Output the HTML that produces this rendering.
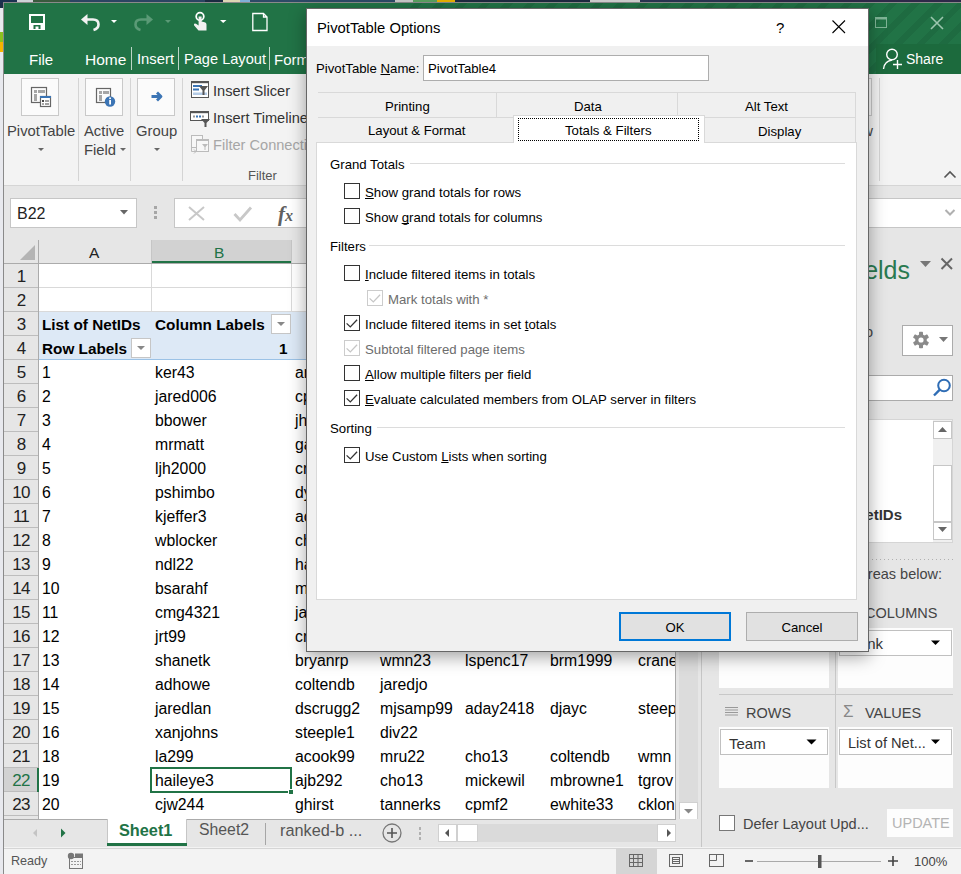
<!DOCTYPE html><html><head><meta charset="utf-8"><style>
*{margin:0;padding:0;box-sizing:border-box}
html,body{width:961px;height:874px;overflow:hidden}
body{position:relative;background:#1c3048;font-family:"Liberation Sans",sans-serif;color:#000}
.a{position:absolute}
.t{white-space:nowrap;line-height:1}
u{text-decoration-skip-ink:none}
</style></head><body>
<div class="a" style="left:0px;top:0px;width:961px;height:3px;background:linear-gradient(90deg,#1b3150 0 17px,#cfd3d8 17px 33px,#3a5a3e 33px 70px,#2b4562 70px 205px,#1b2a40 205px 223px,#ddd6b4 223px 240px,#7fb0d8 240px 250px,#2d4a66 250px 395px,#c8c8c8 395px 413px,#5aa060 413px 437px,#e8b000 437px 455px,#1e2a40 455px 590px,#cfcfcf 590px 640px,#2a3552 640px 720px,#2e2848 720px 961px)"></div>
<div class="a" style="left:0px;top:8px;width:3px;height:866px;background:#e8e9ee"></div>
<div class="a" style="left:0px;top:32px;width:3px;height:10px;background:#8cc11f"></div>
<div class="a" style="left:0px;top:42px;width:3px;height:10px;background:#f7b400"></div>
<div class="a" style="left:3px;top:2px;width:958px;height:872px;background:#8a8a8a"></div>
<div class="a" style="left:4px;top:3px;width:957px;height:871px;background:#e6e6e6"></div>
<div class="a" style="left:4px;top:3px;width:957px;height:71px;background:#217346"></div>
<div class="a" style="left:400px;top:3px;width:561px;height:71px;background:repeating-linear-gradient(135deg,#217346 0 10px,#1e6b41 10px 16px)"></div>
<div class="a" style="left:876px;top:44px;width:85px;height:30px;background:#1c6a3d"></div>
<div class="a" style="left:4px;top:74px;width:957px;height:111px;background:#f3f3f3"></div>
<div class="a" style="left:4px;top:185px;width:957px;height:1px;background:#d5d5d5"></div>
<div class="a" style="left:4px;top:186px;width:957px;height:54px;background:#e6e6e6"></div>
<svg class="a" style="left:0;top:0" width="961" height="80"><rect x="30" y="15" width="14" height="14" fill="none" stroke="#fff" stroke-width="2"/><rect x="29" y="23" width="16" height="7" fill="#fff"/><rect x="33.5" y="25" width="7" height="4" fill="#217346"/><rect x="35.5" y="26.5" width="3" height="2.5" fill="#fff"/><path d="M85 19.5 H93 Q98.5 19.5 98.5 24.5 Q98.5 28.5 93.5 30" fill="none" stroke="#f2f2f2" stroke-width="2.6"/><path d="M81 19.5 L87.5 14 L87.5 25 Z" fill="#f2f2f2"/><path d="M111 20 L117 20 L114 23 Z" fill="#fff"/><path d="M149 19.5 H141 Q135.5 19.5 135.5 24.5 Q135.5 28.5 140.5 30" fill="none" stroke="#5a9a76" stroke-width="2.6"/><path d="M153 19.5 L146.5 14 L146.5 25 Z" fill="#5a9a76"/><path d="M165 20 L171 20 L168 23 Z" fill="#5a9a76"/><circle cx="200" cy="16.5" r="3.8" fill="none" stroke="#fff" stroke-width="1.8"/><path d="M198.6 16.5 L198.6 25.5 L196 23.8 Q193.5 23 194 25.2 L198.5 30.5 L206.5 30.5 L206.5 24.5 Q206.5 22.6 204.6 22.2 L201.6 21.6 L201.6 16.5 Z" fill="#f2f2f2"/><path d="M220 20 L226.5 20 L223.2 23 Z" fill="#fff"/><path d="M252.8 13.5 L263.5 13.5 L267 17 L267 30.5 L252.8 30.5 Z M263.5 13.5 L263.5 17 L267 17" fill="none" stroke="#fff" stroke-width="1.3"/><rect x="875.5" y="17.5" width="11" height="10" fill="none" stroke="#7fb496" stroke-width="1"/><rect x="875.5" y="17.5" width="11" height="2" fill="#7fb496"/><path d="M931 17 L943 29 M943 17 L931 29" stroke="#9cc6ae" stroke-width="1.6"/></svg>
<div class="a t" style="left:29px;top:52px;font-size:15px;color:#fff">File</div>
<div class="a t" style="left:85px;top:52px;font-size:15.5px;color:#fff">Home</div>
<div class="a t" style="left:137px;top:52px;font-size:14.8px;color:#fff">Insert</div>
<div class="a t" style="left:184px;top:52px;font-size:14.6px;color:#fff">Page Layout</div>
<div class="a t" style="left:274px;top:52px;font-size:15px;color:#fff">Formulas</div>
<div class="a" style="left:131px;top:47px;width:1px;height:23px;background:#bcd5c6"></div>
<div class="a" style="left:178px;top:47px;width:1px;height:23px;background:#bcd5c6"></div>
<div class="a" style="left:269px;top:47px;width:1px;height:23px;background:#bcd5c6"></div>
<div class="a" style="left:876px;top:44px;width:85px;height:30px;background:#1c6a3d"></div>
<svg class="a" style="left:880px;top:46px" width="24" height="26"><circle cx="12" cy="8.5" r="5.3" fill="none" stroke="#fff" stroke-width="1.4"/><path d="M3.5 23 Q4 15.5 12 14" fill="none" stroke="#fff" stroke-width="1.4"/><path d="M13 18.5 L22 18.5 M17.5 14 L17.5 23" stroke="#fff" stroke-width="1.4"/></svg>
<div class="a t" style="left:906px;top:52px;font-size:14px;color:#fff">Share</div>
<div class="a" style="left:21px;top:78px;width:38px;height:38px;background:#fbfbfb;border:1px solid #c9c9c9"></div>
<div class="a" style="left:85px;top:78px;width:38px;height:38px;background:#fbfbfb;border:1px solid #c9c9c9"></div>
<div class="a" style="left:137px;top:78px;width:38px;height:38px;background:#fbfbfb;border:1px solid #c9c9c9"></div>
<div class="a" style="left:78px;top:78px;width:1px;height:103px;background:#d4d4d4"></div>
<div class="a" style="left:130px;top:78px;width:1px;height:103px;background:#d4d4d4"></div>
<div class="a" style="left:182px;top:78px;width:1px;height:103px;background:#d4d4d4"></div>
<svg class="a" style="left:0;top:74px" width="310" height="111"><rect x="31.5" y="13.5" width="15" height="15" fill="#fbfbfb" stroke="#666" stroke-width="1.2"/><rect x="34" y="16" width="3" height="3" fill="#a6a6a6"/><rect x="38" y="16" width="7" height="3" fill="#a6a6a6"/><rect x="34" y="20" width="3" height="7" fill="#a6a6a6"/><rect x="40.5" y="22.5" width="10" height="10" fill="#fff" stroke="#666" stroke-width="1.2"/><rect x="40" y="22" width="11" height="2" fill="#3a74b5"/><rect x="42" y="26" width="2" height="2" fill="#444"/><rect x="45" y="26.5" width="4" height="1" fill="#444"/><rect x="42" y="29" width="2" height="2" fill="#aaa"/><rect x="45" y="29.5" width="4" height="1" fill="#444"/><rect x="96.5" y="14.5" width="14" height="14" fill="#fbfbfb" stroke="#666" stroke-width="1.2"/><rect x="99" y="17" width="3" height="3" fill="#a6a6a6"/><rect x="103" y="17" width="6" height="3" fill="#a6a6a6"/><rect x="99" y="21" width="3" height="6" fill="#a6a6a6"/><circle cx="110" cy="27.5" r="5.2" fill="#3c75b5"/><rect x="109.2" y="26" width="1.8" height="4.5" fill="#fff"/><rect x="109.2" y="23.5" width="1.8" height="1.6" fill="#fff"/><path d="M151.5 22.5 H160.5 M157 18.5 L161 22.5 L157 26.5" fill="none" stroke="#3c75b5" stroke-width="2.8" stroke-linejoin="round"/><path d="M38 74 L44 74 L41 77 Z" fill="#666"/><path d="M120 74 L126 74 L123 77 Z" fill="#666"/><path d="M154 74 L160 74 L157 77 Z" fill="#666"/><rect x="191.5" y="7.5" width="17" height="16" fill="#fff" stroke="#555" stroke-width="1"/><rect x="191" y="7" width="18" height="2.2" fill="#555"/><rect x="193" y="11" width="9" height="2" fill="#3a74b5"/><rect x="193" y="14.5" width="6" height="2" fill="#3a74b5"/><rect x="193" y="18.5" width="14" height="2.5" fill="#b4cbe6"/><path d="M199 12 L208 12 L204.5 16.5 L204.5 21 L202.5 21 L202.5 16.5 Z" fill="#555"/><rect x="190.5" y="37.5" width="18" height="9" fill="#fff" stroke="#555" stroke-width="1"/><rect x="190" y="37" width="19" height="2.2" fill="#555"/><rect x="193" y="41.5" width="2" height="2" fill="#999"/><rect x="196" y="41.5" width="2" height="2" fill="#3a74b5"/><rect x="199" y="41.5" width="2" height="2" fill="#3a74b5"/><rect x="202" y="41.5" width="2" height="2" fill="#999"/><path d="M201 45 L210 45 L206.5 49 L206.5 53 L204.5 53 L204.5 49 Z" fill="#555"/><rect x="191.5" y="61.5" width="11" height="12" fill="#f7f7f7" stroke="#bbb" stroke-width="1"/><rect x="196.5" y="65.5" width="12" height="12" fill="#f7f7f7" stroke="#bbb" stroke-width="1"/><rect x="196" y="65" width="13" height="2" fill="#bbb"/><path d="M202 70 L208 70 L205.5 73 L205.5 76 L204.5 76 L204.5 73 Z" fill="#bbb"/><path d="M191.5 74 V77.5 H196 M194 75.5 L196 77.5 L194 79.5" fill="none" stroke="#bbb" stroke-width="1"/></svg>
<div class="a t" style="left:7px;top:124px;font-size:14.8px;color:#444444">PivotTable</div>
<div class="a t" style="left:84px;top:124px;font-size:14.8px;color:#444444">Active</div>
<div class="a t" style="left:84px;top:143px;font-size:14.8px;color:#444444">Field</div>
<div class="a t" style="left:136px;top:124px;font-size:14.8px;color:#444444">Group</div>
<div class="a t" style="left:213px;top:84px;font-size:14.6px;color:#333">Insert Slicer</div>
<div class="a t" style="left:213px;top:111px;font-size:14.6px;color:#333">Insert Timeline</div>
<div class="a t" style="left:213px;top:138px;font-size:14.6px;color:#a6a6a6">Filter Connections</div>
<div class="a t" style="left:248px;top:169px;font-size:13px;color:#555">Filter</div>
<div class="a" style="left:879px;top:78px;width:1px;height:103px;background:#d4d4d4"></div>
<svg class="a" style="left:940px;top:166px" width="20" height="16"><path d="M4.5 11.5 L10 6 L15.5 11.5" fill="none" stroke="#555" stroke-width="1.6"/></svg>
<div class="a" style="left:850px;top:78px;width:22px;height:38px;background:#fbfbfb;border:1px solid #c9c9c9"></div>
<div class="a t" style="right:88px;top:124px;font-size:14.8px;color:#444">Show</div>
<div class="a" style="left:10px;top:198px;width:127px;height:30px;background:#fff;border:1px solid #c6c6c6"></div>
<div class="a t" style="left:17px;top:206px;font-size:16px;color:#222">B22</div>
<svg class="a" style="left:118px;top:208px" width="14" height="10"><path d="M2 2 L10 2 L6 6.5 Z" fill="#666"/></svg>
<div class="a" style="left:154px;top:206px;width:3px;height:3px;background:#a6a6a6"></div>
<div class="a" style="left:154px;top:211px;width:3px;height:3px;background:#a6a6a6"></div>
<div class="a" style="left:154px;top:216px;width:3px;height:3px;background:#a6a6a6"></div>
<div class="a" style="left:174px;top:198px;width:787px;height:30px;background:#fff;border:1px solid #c6c6c6;border-right:none"></div>
<svg class="a" style="left:180px;top:200px" width="130" height="26"><path d="M9 7 L24 20 M24 7 L9 20" stroke="#c8c8c8" stroke-width="2"/><path d="M54.5 14 L60 20 L71 7.5" fill="none" stroke="#c8c8c8" stroke-width="2.8"/></svg>
<div class="a t" style="left:278px;top:204px;font-family:Liberation Serif,serif;font-size:21px;color:#606060;font-weight:bold"><i>f</i><i style="font-size:16px;margin-left:0px">x</i></div>
<svg class="a" style="left:940px;top:205px" width="18" height="16"><path d="M5.5 5 L10 9.5 L14.5 5" fill="none" stroke="#b0b0b0" stroke-width="2"/></svg>
<div class="a" style="left:4px;top:240px;width:672px;height:579px;background:#fff"></div>
<div class="a" style="left:4px;top:240px;width:672px;height:23px;background:#e6e6e6"></div>
<div class="a" style="left:151px;top:240px;width:140px;height:23px;background:#d2d2d2"></div>
<div class="a" style="left:151px;top:261px;width:140px;height:2px;background:#217346"></div>
<div class="a" style="left:4px;top:263px;width:672px;height:1px;background:#ababab"></div>
<div class="a" style="left:151px;top:240px;width:1px;height:23px;background:#c6c6c6"></div>
<div class="a" style="left:291px;top:240px;width:1px;height:23px;background:#c6c6c6"></div>
<div class="a" style="left:376px;top:240px;width:1px;height:23px;background:#c6c6c6"></div>
<div class="a" style="left:461px;top:240px;width:1px;height:23px;background:#c6c6c6"></div>
<div class="a" style="left:546px;top:240px;width:1px;height:23px;background:#c6c6c6"></div>
<div class="a" style="left:634px;top:240px;width:1px;height:23px;background:#c6c6c6"></div>
<svg class="a" style="left:0;top:240px" width="40" height="24"><path d="M20 20 L35 20 L35 5 Z" fill="#b4b4b4"/></svg>
<div class="a t" style="left:89px;top:245px;font-size:15.5px;color:#222">A</div>
<div class="a t" style="left:214px;top:245px;font-size:15.5px;color:#217346">B</div>
<div class="a" style="left:4px;top:264px;width:34px;height:555px;background:#e6e6e6"></div>
<div class="a" style="left:38px;top:240px;width:1px;height:579px;background:#ababab"></div>
<div class="a" style="left:4px;top:287px;width:34px;height:1px;background:#bdbdbd"></div>
<div class="a t" style="left:4px;top:268px;width:34px;text-align:center;font-size:17px;letter-spacing:-0.8px;color:#222">1</div>
<div class="a" style="left:4px;top:311px;width:34px;height:1px;background:#bdbdbd"></div>
<div class="a t" style="left:4px;top:292px;width:34px;text-align:center;font-size:17px;letter-spacing:-0.8px;color:#222">2</div>
<div class="a" style="left:4px;top:335px;width:34px;height:1px;background:#bdbdbd"></div>
<div class="a t" style="left:4px;top:316px;width:34px;text-align:center;font-size:17px;letter-spacing:-0.8px;color:#222">3</div>
<div class="a" style="left:4px;top:359px;width:34px;height:1px;background:#bdbdbd"></div>
<div class="a t" style="left:4px;top:340px;width:34px;text-align:center;font-size:17px;letter-spacing:-0.8px;color:#222">4</div>
<div class="a" style="left:4px;top:383px;width:34px;height:1px;background:#bdbdbd"></div>
<div class="a t" style="left:4px;top:364px;width:34px;text-align:center;font-size:17px;letter-spacing:-0.8px;color:#222">5</div>
<div class="a" style="left:4px;top:407px;width:34px;height:1px;background:#bdbdbd"></div>
<div class="a t" style="left:4px;top:388px;width:34px;text-align:center;font-size:17px;letter-spacing:-0.8px;color:#222">6</div>
<div class="a" style="left:4px;top:431px;width:34px;height:1px;background:#bdbdbd"></div>
<div class="a t" style="left:4px;top:412px;width:34px;text-align:center;font-size:17px;letter-spacing:-0.8px;color:#222">7</div>
<div class="a" style="left:4px;top:455px;width:34px;height:1px;background:#bdbdbd"></div>
<div class="a t" style="left:4px;top:436px;width:34px;text-align:center;font-size:17px;letter-spacing:-0.8px;color:#222">8</div>
<div class="a" style="left:4px;top:479px;width:34px;height:1px;background:#bdbdbd"></div>
<div class="a t" style="left:4px;top:460px;width:34px;text-align:center;font-size:17px;letter-spacing:-0.8px;color:#222">9</div>
<div class="a" style="left:4px;top:503px;width:34px;height:1px;background:#bdbdbd"></div>
<div class="a t" style="left:4px;top:484px;width:34px;text-align:center;font-size:17px;letter-spacing:-0.8px;color:#222">10</div>
<div class="a" style="left:4px;top:527px;width:34px;height:1px;background:#bdbdbd"></div>
<div class="a t" style="left:4px;top:508px;width:34px;text-align:center;font-size:17px;letter-spacing:-0.8px;color:#222">11</div>
<div class="a" style="left:4px;top:551px;width:34px;height:1px;background:#bdbdbd"></div>
<div class="a t" style="left:4px;top:532px;width:34px;text-align:center;font-size:17px;letter-spacing:-0.8px;color:#222">12</div>
<div class="a" style="left:4px;top:575px;width:34px;height:1px;background:#bdbdbd"></div>
<div class="a t" style="left:4px;top:556px;width:34px;text-align:center;font-size:17px;letter-spacing:-0.8px;color:#222">13</div>
<div class="a" style="left:4px;top:599px;width:34px;height:1px;background:#bdbdbd"></div>
<div class="a t" style="left:4px;top:580px;width:34px;text-align:center;font-size:17px;letter-spacing:-0.8px;color:#222">14</div>
<div class="a" style="left:4px;top:623px;width:34px;height:1px;background:#bdbdbd"></div>
<div class="a t" style="left:4px;top:604px;width:34px;text-align:center;font-size:17px;letter-spacing:-0.8px;color:#222">15</div>
<div class="a" style="left:4px;top:647px;width:34px;height:1px;background:#bdbdbd"></div>
<div class="a t" style="left:4px;top:628px;width:34px;text-align:center;font-size:17px;letter-spacing:-0.8px;color:#222">16</div>
<div class="a" style="left:4px;top:671px;width:34px;height:1px;background:#bdbdbd"></div>
<div class="a t" style="left:4px;top:652px;width:34px;text-align:center;font-size:17px;letter-spacing:-0.8px;color:#222">17</div>
<div class="a" style="left:4px;top:695px;width:34px;height:1px;background:#bdbdbd"></div>
<div class="a t" style="left:4px;top:676px;width:34px;text-align:center;font-size:17px;letter-spacing:-0.8px;color:#222">18</div>
<div class="a" style="left:4px;top:719px;width:34px;height:1px;background:#bdbdbd"></div>
<div class="a t" style="left:4px;top:700px;width:34px;text-align:center;font-size:17px;letter-spacing:-0.8px;color:#222">19</div>
<div class="a" style="left:4px;top:743px;width:34px;height:1px;background:#bdbdbd"></div>
<div class="a t" style="left:4px;top:724px;width:34px;text-align:center;font-size:17px;letter-spacing:-0.8px;color:#222">20</div>
<div class="a" style="left:4px;top:767px;width:34px;height:1px;background:#bdbdbd"></div>
<div class="a t" style="left:4px;top:748px;width:34px;text-align:center;font-size:17px;letter-spacing:-0.8px;color:#222">21</div>
<div class="a" style="left:4px;top:791px;width:34px;height:1px;background:#bdbdbd"></div>
<div class="a" style="left:4px;top:768px;width:34px;height:23px;background:#d2d2d2"></div>
<div class="a" style="left:37px;top:768px;width:2px;height:24px;background:#217346"></div>
<div class="a t" style="left:4px;top:772px;width:34px;text-align:center;font-size:17px;letter-spacing:-0.8px;color:#217346">22</div>
<div class="a" style="left:4px;top:815px;width:34px;height:1px;background:#bdbdbd"></div>
<div class="a t" style="left:4px;top:796px;width:34px;text-align:center;font-size:17px;letter-spacing:-0.8px;color:#222">23</div>
<div class="a" style="left:39px;top:287px;width:637px;height:1px;background:#d9d9d9"></div>
<div class="a" style="left:39px;top:311px;width:637px;height:1px;background:#d9d9d9"></div>
<div class="a" style="left:151px;top:264px;width:1px;height:47px;background:#d9d9d9"></div>
<div class="a" style="left:291px;top:264px;width:1px;height:47px;background:#d9d9d9"></div>
<div class="a" style="left:376px;top:264px;width:1px;height:47px;background:#d9d9d9"></div>
<div class="a" style="left:461px;top:264px;width:1px;height:47px;background:#d9d9d9"></div>
<div class="a" style="left:546px;top:264px;width:1px;height:47px;background:#d9d9d9"></div>
<div class="a" style="left:634px;top:264px;width:1px;height:47px;background:#d9d9d9"></div>
<div class="a" style="left:39px;top:312px;width:637px;height:48px;background:#dde9f6"></div>
<div class="a" style="left:39px;top:359px;width:637px;height:1px;background:#9bc2e6"></div>
<div class="a t" style="left:42px;top:317px;font-weight:bold;font-size:15.3px;color:#000">List of NetIDs</div>
<div class="a t" style="left:155px;top:317px;font-weight:bold;font-size:15.3px;color:#000">Column Labels</div>
<div class="a t" style="left:42px;top:341px;font-weight:bold;font-size:15.3px;color:#000">Row Labels</div>
<div class="a t" style="left:279px;top:341px;font-weight:bold;font-size:15.3px;color:#000">1</div>
<div class="a" style="left:271px;top:314px;width:20px;height:20px;background:#fff;border:1px solid #c6c6c6"></div>
<svg class="a" style="left:271px;top:314px" width="20" height="20"><path d="M6 8 L14 8 L10 12 Z" fill="#888"/></svg>
<div class="a" style="left:131px;top:338px;width:20px;height:20px;background:#fff;border:1px solid #c6c6c6"></div>
<svg class="a" style="left:131px;top:338px" width="20" height="20"><path d="M6 8 L14 8 L10 12 Z" fill="#888"/></svg>
<div class="a" style="left:39px;top:360px;width:636px;height:459px;overflow:hidden">
<div class="a t" style="left:3px;top:5px;font-size:15.8px;color:#000">1</div>
<div class="a t" style="left:116px;top:5px;font-size:15.8px;color:#000">ker43</div>
<div class="a t" style="left:256px;top:5px;font-size:15.8px;color:#000">ar</div>
<div class="a t" style="left:3px;top:29px;font-size:15.8px;color:#000">2</div>
<div class="a t" style="left:116px;top:29px;font-size:15.8px;color:#000">jared006</div>
<div class="a t" style="left:256px;top:29px;font-size:15.8px;color:#000">cp</div>
<div class="a t" style="left:3px;top:53px;font-size:15.8px;color:#000">3</div>
<div class="a t" style="left:116px;top:53px;font-size:15.8px;color:#000">bbower</div>
<div class="a t" style="left:256px;top:53px;font-size:15.8px;color:#000">jh</div>
<div class="a t" style="left:3px;top:77px;font-size:15.8px;color:#000">4</div>
<div class="a t" style="left:116px;top:77px;font-size:15.8px;color:#000">mrmatt</div>
<div class="a t" style="left:256px;top:77px;font-size:15.8px;color:#000">ga</div>
<div class="a t" style="left:3px;top:101px;font-size:15.8px;color:#000">5</div>
<div class="a t" style="left:116px;top:101px;font-size:15.8px;color:#000">ljh2000</div>
<div class="a t" style="left:256px;top:101px;font-size:15.8px;color:#000">cr</div>
<div class="a t" style="left:3px;top:125px;font-size:15.8px;color:#000">6</div>
<div class="a t" style="left:116px;top:125px;font-size:15.8px;color:#000">pshimbo</div>
<div class="a t" style="left:256px;top:125px;font-size:15.8px;color:#000">dy</div>
<div class="a t" style="left:3px;top:149px;font-size:15.8px;color:#000">7</div>
<div class="a t" style="left:116px;top:149px;font-size:15.8px;color:#000">kjeffer3</div>
<div class="a t" style="left:256px;top:149px;font-size:15.8px;color:#000">ac</div>
<div class="a t" style="left:3px;top:173px;font-size:15.8px;color:#000">8</div>
<div class="a t" style="left:116px;top:173px;font-size:15.8px;color:#000">wblocker</div>
<div class="a t" style="left:256px;top:173px;font-size:15.8px;color:#000">ch</div>
<div class="a t" style="left:3px;top:197px;font-size:15.8px;color:#000">9</div>
<div class="a t" style="left:116px;top:197px;font-size:15.8px;color:#000">ndl22</div>
<div class="a t" style="left:256px;top:197px;font-size:15.8px;color:#000">ha</div>
<div class="a t" style="left:3px;top:221px;font-size:15.8px;color:#000">10</div>
<div class="a t" style="left:116px;top:221px;font-size:15.8px;color:#000">bsarahf</div>
<div class="a t" style="left:256px;top:221px;font-size:15.8px;color:#000">m</div>
<div class="a t" style="left:3px;top:245px;font-size:15.8px;color:#000">11</div>
<div class="a t" style="left:116px;top:245px;font-size:15.8px;color:#000">cmg4321</div>
<div class="a t" style="left:256px;top:245px;font-size:15.8px;color:#000">ja</div>
<div class="a t" style="left:3px;top:269px;font-size:15.8px;color:#000">12</div>
<div class="a t" style="left:116px;top:269px;font-size:15.8px;color:#000">jrt99</div>
<div class="a t" style="left:256px;top:269px;font-size:15.8px;color:#000">cr</div>
<div class="a t" style="left:3px;top:293px;font-size:15.8px;color:#000">13</div>
<div class="a t" style="left:116px;top:293px;font-size:15.8px;color:#000">shanetk</div>
<div class="a t" style="left:256px;top:293px;font-size:15.8px;color:#000">bryanrp</div>
<div class="a t" style="left:341px;top:293px;font-size:15.8px;color:#000">wmn23</div>
<div class="a t" style="left:426px;top:293px;font-size:15.8px;color:#000">lspenc17</div>
<div class="a t" style="left:511px;top:293px;font-size:15.8px;color:#000">brm1999</div>
<div class="a t" style="left:599px;top:293px;font-size:15.8px;color:#000">crane</div>
<div class="a t" style="left:3px;top:317px;font-size:15.8px;color:#000">14</div>
<div class="a t" style="left:116px;top:317px;font-size:15.8px;color:#000">adhowe</div>
<div class="a t" style="left:256px;top:317px;font-size:15.8px;color:#000">coltendb</div>
<div class="a t" style="left:341px;top:317px;font-size:15.8px;color:#000">jaredjo</div>
<div class="a t" style="left:3px;top:341px;font-size:15.8px;color:#000">15</div>
<div class="a t" style="left:116px;top:341px;font-size:15.8px;color:#000">jaredlan</div>
<div class="a t" style="left:256px;top:341px;font-size:15.8px;color:#000">dscrugg2</div>
<div class="a t" style="left:341px;top:341px;font-size:15.8px;color:#000">mjsamp99</div>
<div class="a t" style="left:426px;top:341px;font-size:15.8px;color:#000">aday2418</div>
<div class="a t" style="left:511px;top:341px;font-size:15.8px;color:#000">djayc</div>
<div class="a t" style="left:599px;top:341px;font-size:15.8px;color:#000">steeple</div>
<div class="a t" style="left:3px;top:365px;font-size:15.8px;color:#000">16</div>
<div class="a t" style="left:116px;top:365px;font-size:15.8px;color:#000">xanjohns</div>
<div class="a t" style="left:256px;top:365px;font-size:15.8px;color:#000">steeple1</div>
<div class="a t" style="left:341px;top:365px;font-size:15.8px;color:#000">div22</div>
<div class="a t" style="left:3px;top:389px;font-size:15.8px;color:#000">18</div>
<div class="a t" style="left:116px;top:389px;font-size:15.8px;color:#000">la299</div>
<div class="a t" style="left:256px;top:389px;font-size:15.8px;color:#000">acook99</div>
<div class="a t" style="left:341px;top:389px;font-size:15.8px;color:#000">mru22</div>
<div class="a t" style="left:426px;top:389px;font-size:15.8px;color:#000">cho13</div>
<div class="a t" style="left:511px;top:389px;font-size:15.8px;color:#000">coltendb</div>
<div class="a t" style="left:599px;top:389px;font-size:15.8px;color:#000">wmn</div>
<div class="a t" style="left:3px;top:413px;font-size:15.8px;color:#000">19</div>
<div class="a t" style="left:116px;top:413px;font-size:15.8px;color:#000">haileye3</div>
<div class="a t" style="left:256px;top:413px;font-size:15.8px;color:#000">ajb292</div>
<div class="a t" style="left:341px;top:413px;font-size:15.8px;color:#000">cho13</div>
<div class="a t" style="left:426px;top:413px;font-size:15.8px;color:#000">mickewil</div>
<div class="a t" style="left:511px;top:413px;font-size:15.8px;color:#000">mbrowne1</div>
<div class="a t" style="left:599px;top:413px;font-size:15.8px;color:#000">tgrov</div>
<div class="a t" style="left:3px;top:437px;font-size:15.8px;color:#000">20</div>
<div class="a t" style="left:116px;top:437px;font-size:15.8px;color:#000">cjw244</div>
<div class="a t" style="left:256px;top:437px;font-size:15.8px;color:#000">ghirst</div>
<div class="a t" style="left:341px;top:437px;font-size:15.8px;color:#000">tannerks</div>
<div class="a t" style="left:426px;top:437px;font-size:15.8px;color:#000">cpmf2</div>
<div class="a t" style="left:511px;top:437px;font-size:15.8px;color:#000">ewhite33</div>
<div class="a t" style="left:599px;top:437px;font-size:15.8px;color:#000">cklon</div>
</div>
<div class="a" style="left:150px;top:767px;width:142px;height:26px;border:2px solid #217346"></div>
<div class="a" style="left:288px;top:789px;width:6px;height:6px;background:#217346;border:1px solid #fff"></div>
<div class="a" style="left:676px;top:240px;width:25px;height:579px;background:#e6e6e6"></div>
<div class="a" style="left:675px;top:240px;width:1px;height:579px;background:#ababab"></div>
<div class="a" style="left:679px;top:264px;width:19px;height:538px;background:#dcdcdc"></div>
<div class="a" style="left:679px;top:802px;width:19px;height:18px;background:#fff;border:1px solid #d0d0d0"></div>
<svg class="a" style="left:679px;top:802px" width="19" height="18"><path d="M5 7 L14 7 L9.5 11.5 Z" fill="#888"/></svg>
<div class="a" style="left:676px;top:819px;width:26px;height:1px;background:#ababab"></div>
<div class="a" style="left:4px;top:819px;width:698px;height:29px;background:#e6e6e6"></div>
<div class="a" style="left:4px;top:819px;width:672px;height:1px;background:#ababab"></div>
<svg class="a" style="left:0;top:824px" width="80" height="20"><path d="M33 9 L37 5 L37 13 Z" fill="#c4c4c4"/><path d="M61 4.5 L65.5 9 L61 13.5 Z" fill="#217346"/></svg>
<div class="a" style="left:107px;top:819px;width:80px;height:27px;background:#fff;border-left:1px solid #c6c6c6;border-right:1px solid #c6c6c6"></div>
<div class="a" style="left:107px;top:843px;width:80px;height:3px;background:#217346"></div>
<div class="a t" style="left:119px;top:822px;font-weight:bold;font-size:16.3px;color:#217346">Sheet1</div>
<div class="a t" style="left:199px;top:822px;font-size:15.8px;color:#555">Sheet2</div>
<div class="a" style="left:265px;top:823px;width:1px;height:22px;background:#a6a6a6"></div>
<div class="a t" style="left:280px;top:822px;font-size:16.3px;color:#555">ranked-b&nbsp;...</div>
<svg class="a" style="left:380px;top:820px" width="24" height="26"><circle cx="12" cy="13" r="9" fill="none" stroke="#777" stroke-width="1.3"/><path d="M7 13 L17 13 M12 8 L12 18" stroke="#555" stroke-width="1.6"/></svg>
<div class="a" style="left:419px;top:827px;width:2px;height:3px;background:#b0b0b0"></div>
<div class="a" style="left:419px;top:832px;width:2px;height:3px;background:#b0b0b0"></div>
<div class="a" style="left:419px;top:837px;width:2px;height:3px;background:#b0b0b0"></div>
<div class="a" style="left:438px;top:824px;width:238px;height:18px;background:#dadada"></div>
<div class="a" style="left:438px;top:824px;width:19px;height:18px;background:#fff;border:1px solid #d0d0d0"></div>
<div class="a" style="left:457px;top:824px;width:21px;height:18px;background:#fff;border:1px solid #d0d0d0"></div>
<div class="a" style="left:657px;top:824px;width:19px;height:18px;background:#fff;border:1px solid #d0d0d0"></div>
<svg class="a" style="left:438px;top:824px" width="240" height="18"><path d="M11 5 L7 9 L11 13 Z" fill="#555"/><path d="M229 5 L233 9 L229 13 Z" fill="#555"/></svg>
<div class="a" style="left:701px;top:819px;width:1px;height:29px;background:#c6c6c6"></div>
<div class="a" style="left:4px;top:847px;width:957px;height:27px;background:#f3f3f3"></div>
<div class="a" style="left:4px;top:848px;width:957px;height:1px;background:#d5d5d5"></div>
<div class="a t" style="left:11px;top:855px;font-size:12.6px;color:#555">Ready</div>
<svg class="a" style="left:66px;top:851px" width="20" height="20"><rect x="3.5" y="6.5" width="13" height="11" fill="none" stroke="#777"/><path d="M5 10.5 H15 M5 13.5 H15" stroke="#999" stroke-width="1" stroke-dasharray="2,1"/><circle cx="5" cy="5" r="3.2" fill="#777"/><rect x="9" y="2.5" width="8" height="4" fill="#777"/></svg>
<div class="a" style="left:616px;top:848px;width:41px;height:26px;background:#d5d5d5"></div>
<svg class="a" style="left:616px;top:848px" width="130" height="26"><rect x="13.5" y="6.5" width="13" height="12" fill="none" stroke="#666"/><path d="M13.5 10.5 H26.5 M13.5 14.5 H26.5 M17.5 6.5 V18.5 M22 6.5 V18.5" stroke="#666"/><rect x="53.5" y="6.5" width="13" height="12" fill="none" stroke="#666"/><rect x="56.5" y="9.5" width="7" height="6" fill="none" stroke="#666"/><path d="M57 11.5 H63 M57 13.5 H63" stroke="#666"/><rect x="93.5" y="6.5" width="14" height="12" fill="none" stroke="#666"/><path d="M100.5 6.5 V12.5 H93.5" fill="none" stroke="#666"/></svg>
<svg class="a" style="left:740px;top:848px" width="221" height="26"><path d="M5 13 H13" stroke="#444" stroke-width="1.6"/><path d="M17 13.5 H141" stroke="#aaa" stroke-width="1"/><rect x="78" y="7" width="3.5" height="13" fill="#555"/><path d="M148 13 H158 M153 8 V18" stroke="#444" stroke-width="1.6"/></svg>
<div class="a t" style="left:914px;top:855px;font-size:13px;color:#444">100%</div>
<div class="a" style="left:702px;top:228px;width:259px;height:619px;background:#e6e6e6"></div>
<div class="a" style="left:701px;top:228px;width:1px;height:619px;background:#c6c6c6"></div>
<div class="a t" style="right:51px;top:258px;font-size:25px;color:#2a7a50">PivotTable Fields</div>
<svg class="a" style="left:915px;top:255px" width="46" height="20"><path d="M5 6 L16 6 L10.5 12 Z" fill="#777"/><path d="M26.5 3.5 L37 14 M37 3.5 L26.5 14" stroke="#666" stroke-width="2"/></svg>
<div class="a t" style="right:88px;top:325px;font-size:14.5px;color:#444">Choose fields to add to</div>
<div class="a" style="left:902px;top:325px;width:51px;height:31px;background:#fff;border:1px solid #ababab"></div>
<svg class="a" style="left:902px;top:325px" width="51" height="31"><g transform="translate(19,15)" fill="#8a8a8a"><circle r="5.8"/><rect x="-2" y="-8.2" width="4" height="16.4" rx="0.8"/><rect x="-2" y="-8.2" width="4" height="16.4" rx="0.8" transform="rotate(60)"/><rect x="-2" y="-8.2" width="4" height="16.4" rx="0.8" transform="rotate(120)"/><circle r="2.6" fill="#fff"/></g><path d="M37 12 L46 12 L41.5 17 Z" fill="#777"/></svg>
<div class="a" style="left:712px;top:375px;width:241px;height:26px;background:#fff;border:1px solid #ababab"></div>
<svg class="a" style="left:930px;top:377px" width="22" height="22"><circle cx="14" cy="8.5" r="5.8" fill="none" stroke="#2f6db5" stroke-width="2"/><path d="M9.8 12.7 L4 18.5" stroke="#2f6db5" stroke-width="2.4"/></svg>
<div class="a" style="left:712px;top:419px;width:241px;height:124px;background:#fff;border:1px solid #d5d5d5"></div>
<div class="a" style="left:933px;top:420px;width:19px;height:122px;background:#f0f0f0"></div>
<div class="a" style="left:933px;top:421px;width:19px;height:18px;background:#fff;border:1px solid #c6c6c6"></div>
<div class="a" style="left:933px;top:465px;width:19px;height:57px;background:#fff;border:1px solid #c6c6c6"></div>
<div class="a" style="left:933px;top:522px;width:19px;height:18px;background:#fff;border:1px solid #c6c6c6"></div>
<svg class="a" style="left:933px;top:421px" width="19" height="120"><path d="M5 11 L14 11 L9.5 6 Z" fill="#666"/><path d="M5 106 L14 106 L9.5 111 Z" fill="#666"/></svg>
<div class="a t" style="right:59px;top:507px;font-size:15px;font-weight:bold;color:#333">List of NetIDs</div>
<svg class="a" style="left:712px;top:558px" width="241" height="3"><line x1="0" y1="1.5" x2="241" y2="1.5" stroke="#b0b0b0" stroke-dasharray="1,3"/></svg>
<div class="a t" style="right:19px;top:567px;font-size:14.5px;color:#444">Drag fields between areas below:</div>
<div class="a" style="left:719px;top:628px;width:110px;height:60px;background:#fdfdfd"></div>
<div class="a" style="left:838px;top:628px;width:115px;height:60px;background:#fdfdfd"></div>
<div class="a" style="left:719px;top:694px;width:234px;height:1px;background:#c8c8c8"></div>
<div class="a" style="left:835px;top:600px;width:1px;height:188px;background:#c8c8c8"></div>
<div class="a t" style="left:746px;top:606px;font-size:14.5px;color:#444">FILTERS</div>
<div class="a t" style="left:865px;top:606px;font-size:14.5px;color:#444">COLUMNS</div>
<div class="a" style="left:839px;top:630px;width:113px;height:26px;background:#fff;border:1px solid #c0c0c0"></div>
<div class="a t" style="left:848px;top:636px;font-size:15px;color:#333">Rank</div>
<svg class="a" style="left:925px;top:636px" width="20" height="14"><path d="M6 4.5 L15 4.5 L10.5 9 Z" fill="#000"/></svg>
<div class="a" style="left:719px;top:727px;width:110px;height:61px;background:#fdfdfd"></div>
<div class="a" style="left:838px;top:727px;width:115px;height:61px;background:#fdfdfd"></div>
<svg class="a" style="left:720px;top:700px" width="20" height="22"><path d="M5 7.5 H18 M5 10 H18 M5 12.5 H18 M5 15 H18" stroke="#999" stroke-width="1.2"/></svg>
<div class="a t" style="left:746px;top:706px;font-size:14.5px;color:#444">ROWS</div>
<div class="a t" style="left:843px;top:703px;font-size:17px;color:#888">&Sigma;</div>
<div class="a t" style="left:865px;top:706px;font-size:14.5px;color:#444">VALUES</div>
<div class="a" style="left:720px;top:729px;width:108px;height:26px;background:#fff;border:1px solid #c0c0c0"></div>
<div class="a t" style="left:729px;top:736px;font-size:15px;color:#333">Team</div>
<svg class="a" style="left:801px;top:735px" width="20" height="14"><path d="M5.5 4.5 L15.5 4.5 L10.5 9.5 Z" fill="#000"/></svg>
<div class="a" style="left:839px;top:729px;width:113px;height:26px;background:#fff;border:1px solid #c0c0c0"></div>
<div class="a t" style="left:848px;top:736px;font-size:14.6px;color:#333">List of Net...</div>
<svg class="a" style="left:925px;top:735px" width="20" height="14"><path d="M6 4.5 L15 4.5 L10.5 9 Z" fill="#000"/></svg>
<div class="a" style="left:719px;top:815px;width:16px;height:16px;background:#fff;border:1px solid #777"></div>
<div class="a t" style="left:743px;top:817px;font-size:14.5px;color:#444">Defer Layout Upd...</div>
<div class="a" style="left:887px;top:809px;width:66px;height:28px;background:#fdfdfd"></div>
<div class="a t" style="left:892px;top:816px;font-size:14.5px;color:#b4b4b4">UPDATE</div>
<div class="a" style="left:306px;top:8px;width:563px;height:644px;background:#f0f0f0;border:1px solid #666;box-shadow:0 5px 16px rgba(0,0,0,0.36)"></div>
<div class="a" style="left:307px;top:9px;width:561px;height:37px;background:#fff"></div>
<div class="a t" style="left:317px;top:21px;font-size:14.8px;color:#000">PivotTable Options</div>
<svg class="a" style="left:770px;top:15px" width="90" height="24"><path d="M62.5 5.5 L75 18 M75 5.5 L62.5 18" stroke="#000" stroke-width="1.1"/></svg>
<div class="a t" style="left:776px;top:20px;font-size:15px;color:#000">?</div>
<div class="a t" style="left:316px;top:62px;font-size:13.2px;color:#000">PivotTable <u>N</u>ame:</div>
<div class="a" style="left:423px;top:55px;width:286px;height:26px;background:#fff;border:1px solid #adadad"></div>
<div class="a t" style="left:428px;top:62px;font-size:13.2px;color:#000">PivotTable4</div>
<div class="a" style="left:318px;top:92px;width:538px;height:1px;background:#d9d9d9"></div>
<div class="a" style="left:318px;top:117px;width:538px;height:1px;background:#d9d9d9"></div>
<div class="a" style="left:496px;top:92px;width:1px;height:26px;background:#d9d9d9"></div>
<div class="a" style="left:677px;top:92px;width:1px;height:26px;background:#d9d9d9"></div>
<div class="a" style="left:855px;top:92px;width:1px;height:26px;background:#d9d9d9"></div>
<div class="a" style="left:855px;top:117px;width:1px;height:25px;background:#d9d9d9"></div>
<div class="a t" style="left:385px;top:100px;font-size:13.2px;color:#000">Printing</div>
<div class="a t" style="left:574px;top:100px;font-size:13.2px;color:#000">Data</div>
<div class="a t" style="left:745px;top:100px;font-size:13.2px;color:#000">Alt Text</div>
<div class="a t" style="left:368px;top:124px;font-size:13.2px;color:#000">Layout &amp; Format</div>
<div class="a t" style="left:758px;top:125px;font-size:13.2px;color:#000">Display</div>
<div class="a" style="left:316px;top:142px;width:541px;height:458px;background:#fff;border:1px solid #d9d9d9"></div>
<div class="a" style="left:513px;top:115px;width:192px;height:28px;background:#fff;border:1px solid #d9d9d9;border-bottom:none"></div>
<div class="a" style="left:518px;top:118px;width:181px;height:23px;border:1px dotted #000"></div>
<div class="a t" style="left:565px;top:124px;font-size:13.2px;color:#000">Totals &amp; Filters</div>
<div class="a t" style="left:330px;top:158px;font-size:13.2px;color:#000">Grand Totals</div>
<div class="a" style="left:410px;top:163px;width:435px;height:1px;background:#dcdcdc"></div>
<div class="a t" style="left:330px;top:240px;font-size:13.2px;color:#000">Filters</div>
<div class="a" style="left:369px;top:245px;width:476px;height:1px;background:#dcdcdc"></div>
<div class="a t" style="left:330px;top:422px;font-size:13.2px;color:#000">Sorting</div>
<div class="a" style="left:377px;top:427px;width:468px;height:1px;background:#dcdcdc"></div>
<div class="a" style="left:344px;top:183px;width:16px;height:16px;background:#fff;border:1px solid #333333"></div>
<div class="a t" style="left:365px;top:186px;font-size:13.2px;color:#000"><u>S</u>how grand totals for rows</div>
<div class="a" style="left:344px;top:208px;width:16px;height:16px;background:#fff;border:1px solid #333333"></div>
<div class="a t" style="left:365px;top:211px;font-size:13.2px;color:#000">Show <u>g</u>rand totals for columns</div>
<div class="a" style="left:344px;top:265px;width:16px;height:16px;background:#fff;border:1px solid #333333"></div>
<div class="a t" style="left:365px;top:268px;font-size:13.2px;color:#000"><u>I</u>nclude filtered items in totals</div>
<div class="a" style="left:367px;top:290px;width:16px;height:16px;background:#fff;border:1px solid #cccccc"></div>
<svg class="a" style="left:367px;top:290px" width="16" height="16"><path d="M2.6 8.4 L6.3 11.9 L13.1 4.7" fill="none" stroke="#c6c6c6" stroke-width="1.3"/></svg>
<div class="a t" style="left:388px;top:293px;font-size:13.2px;color:#6d6d6d">Mark totals with *</div>
<div class="a" style="left:344px;top:315px;width:16px;height:16px;background:#fff;border:1px solid #333333"></div>
<svg class="a" style="left:344px;top:315px" width="16" height="16"><path d="M2.6 8.4 L6.3 11.9 L13.1 4.7" fill="none" stroke="#333" stroke-width="1.3"/></svg>
<div class="a t" style="left:365px;top:318px;font-size:13.2px;color:#000">Include filtered items in set <u>t</u>otals</div>
<div class="a" style="left:344px;top:340px;width:16px;height:16px;background:#fff;border:1px solid #cccccc"></div>
<svg class="a" style="left:344px;top:340px" width="16" height="16"><path d="M2.6 8.4 L6.3 11.9 L13.1 4.7" fill="none" stroke="#c6c6c6" stroke-width="1.3"/></svg>
<div class="a t" style="left:365px;top:343px;font-size:13.2px;color:#6d6d6d">Subtotal filtered page items</div>
<div class="a" style="left:344px;top:365px;width:16px;height:16px;background:#fff;border:1px solid #333333"></div>
<div class="a t" style="left:365px;top:368px;font-size:13.2px;color:#000"><u>A</u>llow multiple filters per field</div>
<div class="a" style="left:344px;top:390px;width:16px;height:16px;background:#fff;border:1px solid #333333"></div>
<svg class="a" style="left:344px;top:390px" width="16" height="16"><path d="M2.6 8.4 L6.3 11.9 L13.1 4.7" fill="none" stroke="#333" stroke-width="1.3"/></svg>
<div class="a t" style="left:365px;top:393px;font-size:13.2px;color:#000"><u>E</u>valuate calculated members from OLAP server in filters</div>
<div class="a" style="left:344px;top:447px;width:16px;height:16px;background:#fff;border:1px solid #333333"></div>
<svg class="a" style="left:344px;top:447px" width="16" height="16"><path d="M2.6 8.4 L6.3 11.9 L13.1 4.7" fill="none" stroke="#333" stroke-width="1.3"/></svg>
<div class="a t" style="left:365px;top:450px;font-size:13.2px;color:#000">Use Custom <u>L</u>ists when sorting</div>
<div class="a" style="left:619px;top:612px;width:112px;height:29px;background:#e1e1e1;border:2px solid #0078d7"></div>
<div class="a t" style="left:619px;top:621px;width:112px;text-align:center;font-size:13.2px;color:#000">OK</div>
<div class="a" style="left:746px;top:612px;width:112px;height:29px;background:#e1e1e1;border:1px solid #adadad"></div>
<div class="a t" style="left:746px;top:621px;width:112px;text-align:center;font-size:13.2px;color:#000">Cancel</div>
</body></html>
